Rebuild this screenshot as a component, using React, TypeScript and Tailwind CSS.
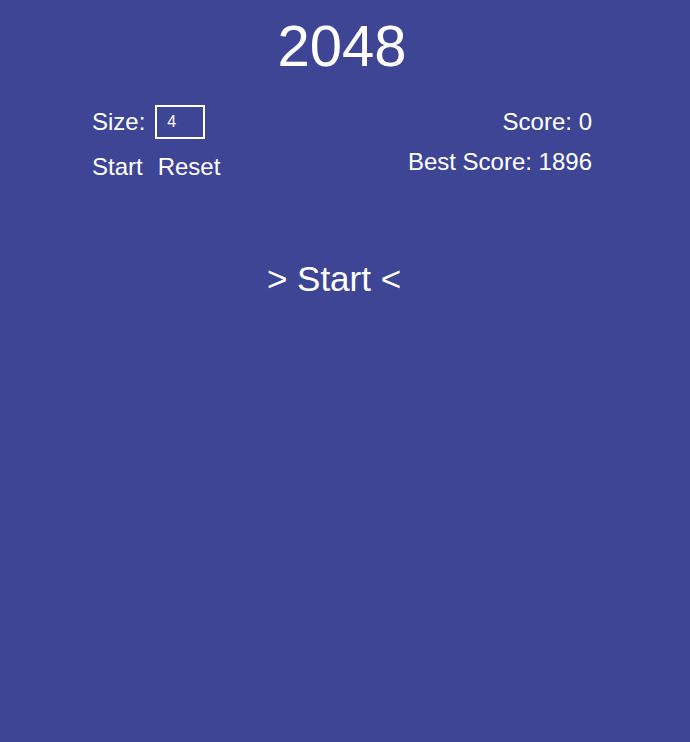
export default function App() {
  return (
    <div
      className="min-h-[742px] w-full bg-[#3d4594] text-white"
      style={{ fontFamily: '"Liberation Sans", Arial, sans-serif' }}
    >
      <div className="w-[684px] pt-[8px]">
        <h1 className="text-center text-[58px] leading-[76px]">2048</h1>
        <div className="mx-auto mt-[21px] flex w-[500px] justify-between">
          <div className="flex flex-col">
            <div className="flex items-center text-[24px] leading-[34px]">
              <span>Size:</span>
              <input
                defaultValue="4"
                className="ml-[10px] h-[34px] w-[50px] border-2 border-white bg-transparent px-[10px] text-[16px] text-white outline-none"
              />
            </div>
            <div className="mt-[14px] flex gap-[15px] text-[24px] leading-[28px]">
              <button>Start</button>
              <button>Reset</button>
            </div>
          </div>
          <div className="flex flex-col items-end text-[24px] leading-[28px]">
            <div className="mt-[3px]">Score: 0</div>
            <div className="mt-[12px]">Best Score: 1896</div>
          </div>
        </div>
        <div className="mt-[78px] text-center">
          <button className="pr-[16px] text-[35px] leading-[40px]">&gt; Start &lt;</button>
        </div>
      </div>
    </div>
  );
}
